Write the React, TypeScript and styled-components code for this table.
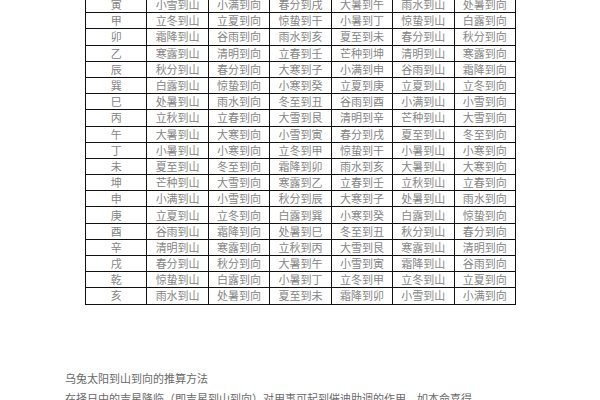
import styled, { createGlobalStyle } from "styled-components";

const GlobalStyle = createGlobalStyle`
  html, body {
    margin: 0;
    padding: 0;
    background: #ffffff;
    overflow: hidden;
  }
  body {
    font-family: "Noto Sans CJK SC", "DejaVu Sans", sans-serif;
  }
`;

const Page = styled.div`
  width: 600px;
  height: 400px;
  overflow: hidden;
  padding-left: 85px;
  box-sizing: border-box;
`;

const Table = styled.table`
  margin-top: -4px;
  width: 431px;
  border-collapse: collapse;
  table-layout: fixed;
`;

const Cell = styled.td`
  height: 15.2px;
  padding: 0;
  border: 1px solid #111;
  text-align: center;
  font-size: 11px;
  line-height: 15px;
  color: #858585;
  white-space: nowrap;
  overflow: hidden;
`;

const Notes = styled.div`
  margin-top: 66px;
  margin-left: -20px;
  display: flex;
  flex-direction: column;
  gap: 6px;
`;

const Line = styled.p`
  margin: 0;
  font-size: 11px;
  line-height: 14px;
  color: #6a6a6a;
  white-space: nowrap;
`;

const rows: string[][] = [
  ["寅", "小雪到山", "小满到向", "春分到戌", "大暑到午", "雨水到山", "处暑到向"],
  ["甲", "立冬到山", "立夏到向", "惊蛰到干", "小暑到丁", "惊蛰到山", "白露到向"],
  ["卯", "霜降到山", "谷雨到向", "雨水到亥", "夏至到未", "春分到山", "秋分到向"],
  ["乙", "寒露到山", "清明到向", "立春到壬", "芒种到坤", "清明到山", "寒露到向"],
  ["辰", "秋分到山", "春分到向", "大寒到子", "小满到申", "谷雨到山", "霜降到向"],
  ["巽", "白露到山", "惊蛰到向", "小寒到癸", "立夏到庚", "立夏到山", "立冬到向"],
  ["巳", "处暑到山", "雨水到向", "冬至到丑", "谷雨到酉", "小满到山", "小雪到向"],
  ["丙", "立秋到山", "立春到向", "大雪到艮", "清明到辛", "芒种到山", "大雪到向"],
  ["午", "大暑到山", "大寒到向", "小雪到寅", "春分到戌", "夏至到山", "冬至到向"],
  ["丁", "小暑到山", "小寒到向", "立冬到甲", "惊蛰到干", "小暑到山", "小寒到向"],
  ["未", "夏至到山", "冬至到向", "霜降到卯", "雨水到亥", "大暑到山", "大寒到向"],
  ["坤", "芒种到山", "大雪到向", "寒露到乙", "立春到壬", "立秋到山", "立春到向"],
  ["申", "小满到山", "小雪到向", "秋分到辰", "大寒到子", "处暑到山", "雨水到向"],
  ["庚", "立夏到山", "立冬到向", "白露到巽", "小寒到癸", "白露到山", "惊蛰到向"],
  ["酉", "谷雨到山", "霜降到向", "处暑到巳", "冬至到丑", "秋分到山", "春分到向"],
  ["辛", "清明到山", "寒露到向", "立秋到丙", "大雪到艮", "寒露到山", "清明到向"],
  ["戌", "春分到山", "秋分到向", "大暑到午", "小雪到寅", "霜降到山", "谷雨到向"],
  ["乾", "惊蛰到山", "白露到向", "小暑到丁", "立冬到甲", "立冬到山", "立夏到向"],
  ["亥", "雨水到山", "处暑到向", "夏至到未", "霜降到卯", "小雪到山", "小满到向"],
];

export default function App() {
  return (
    <>
      <GlobalStyle />
      <Page>
        <Table>
          <tbody>
            {rows.map((row) => (
              <tr key={row[0]}>
                {row.map((text, i) => (
                  <Cell key={i}>{text}</Cell>
                ))}
              </tr>
            ))}
          </tbody>
        </Table>
        <Notes>
          <Line>乌兔太阳到山到向的推算方法</Line>
          <Line>在择日中的吉星降临（即吉星到山到向）对用事可起到催迪助调的作用，如本命喜得</Line>
        </Notes>
      </Page>
    </>
  );
}
